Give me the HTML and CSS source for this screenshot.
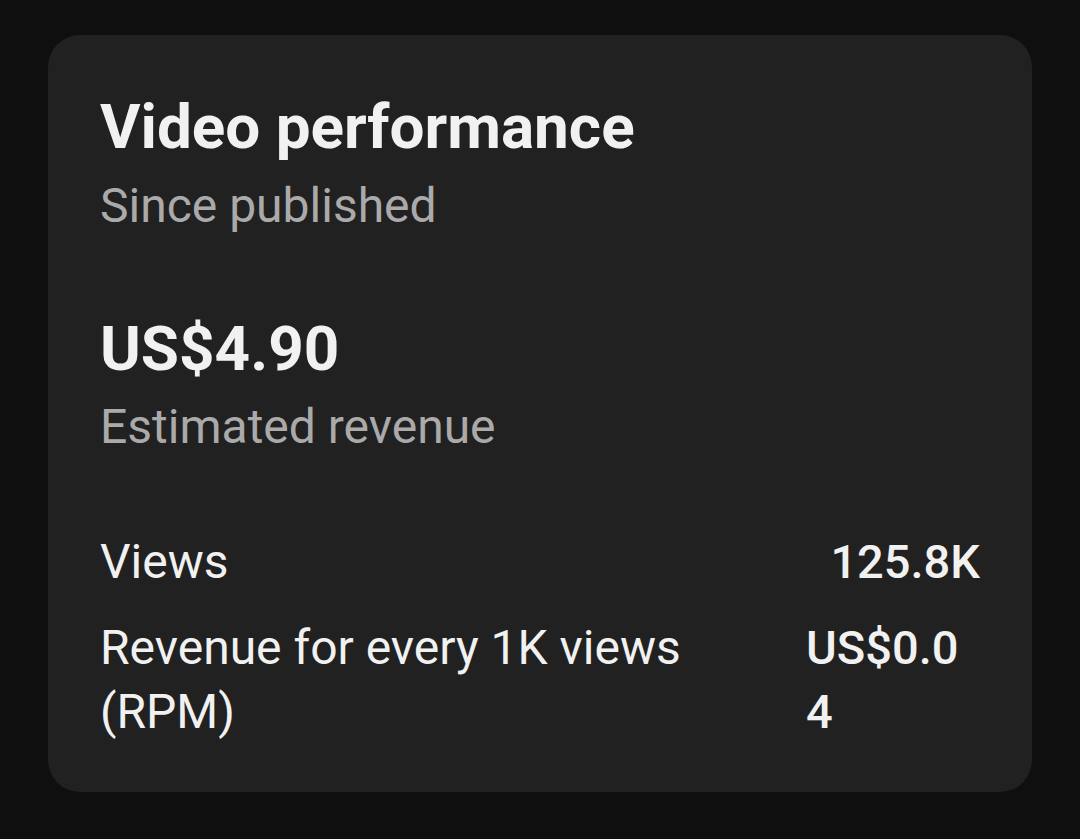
FILE: index.html
```html
<!DOCTYPE html>
<html>
<head>
<meta charset="utf-8">
<link rel="stylesheet" href="styles.css">
</head>
<body>
<div class="page">
  <section class="card">
    <h1 class="title">Video performance</h1>
    <div class="subtitle">Since published</div>
    <div class="amount">US$4.90</div>
    <div class="amount-label">Estimated revenue</div>
    <div class="rows">
      <div class="row">
        <div class="label">Views</div>
        <div class="value">125.8K</div>
      </div>
      <div class="row">
        <div class="label">Revenue for every 1K views (RPM)</div>
        <div class="value">US$0.04</div>
      </div>
    </div>
  </section>
</div>
</body>
</html>
```

FILE: styles.css
```css
html, body {
  margin: 0;
  padding: 0;
  background: #0f0f0f;
}
body {
  width: 1080px;
  height: 839px;
  overflow: hidden;
  font-family: Roboto, "Liberation Sans", sans-serif;
  color: #f1f1f1;
}
.page {
  padding: 35px 48px 0 48px;
}
.card {
  background: #212121;
  border-radius: 32px;
  height: 757px;
  box-sizing: border-box;
  padding: 56px 52px 0 52px;
  display: flex;
  flex-direction: column;
}
.title {
  margin: 0;
  font-size: 62px;
  font-weight: 700;
  line-height: 72px;
}
.subtitle {
  margin-top: 11px;
  font-size: 48px;
  color: #aaaaaa;
  line-height: 64px;
}
.amount {
  margin-top: 75px;
  font-size: 62px;
  font-weight: 700;
  line-height: 72px;
}
.amount-label {
  margin-top: 10px;
  font-size: 48px;
  color: #aaaaaa;
  line-height: 64px;
}
.rows {
  margin-top: 71px;
  display: flex;
  flex-direction: column;
  gap: 22px;
}
.row {
  display: flex;
  justify-content: space-between;
  align-items: flex-start;
  gap: 40px;
  font-size: 48px;
  line-height: 64px;
}
.label {
  flex: 1 1 auto;
}
.value {
  flex: 0 0 auto;
  font-size: 47px;
  font-weight: 500;
  max-width: 174px;
  word-break: break-all;
}
```
